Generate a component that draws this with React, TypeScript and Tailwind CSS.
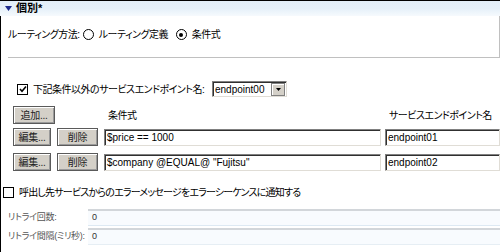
import React from "react";

const font = "font-['Liberation_Sans','Noto_Sans_CJK_JP',sans-serif] [font-feature-settings:'palt']";

function ClassicButton({ label, w }: { label: string; w: string }) {
  return (
    <div
      className={`${w} h-[18px] flex items-center justify-center bg-[#d4d0c8] border border-[#5a5a5a] shadow-[inset_1px_1px_0_#ffffff,inset_-1px_-1px_0_#9a9a9a] text-[10px] tracking-[-0.3px] text-[#222]`}
    >
      {label}
    </div>
  );
}

function SunkenInput({ value, w }: { value: string; w: string }) {
  return (
    <div
      className={`${w} h-[17px] flex items-center pl-[2px] bg-white border border-[#808080] border-b-[#e0ddd6] border-r-[#e0ddd6] shadow-[inset_1px_1px_0_#303030] text-[10px] text-black whitespace-nowrap overflow-hidden`}
    >
      {value}
    </div>
  );
}

function Radio({ checked }: { checked?: boolean }) {
  return (
    <span className="w-[11px] h-[11px] rounded-full border-[1.5px] border-black flex items-center justify-center">
      {checked && <span className="w-[4px] h-[4px] rounded-full bg-black" />}
    </span>
  );
}

function CheckBox({ checked }: { checked?: boolean }) {
  return (
    <span className="w-[11px] h-[11px] border-[1.5px] border-black bg-white flex items-center justify-center">
      {checked && (
        <svg width="8" height="8" viewBox="0 0 8 8">
          <path d="M1 4 L3 6.2 L7 1.5" stroke="black" strokeWidth="1.6" fill="none" />
        </svg>
      )}
    </span>
  );
}

export default function App() {
  return (
    <div className={`w-[500px] h-[252px] bg-white border-t border-black flex flex-col overflow-hidden ${font}`}>
      {/* header */}
      <div className="h-[15px] shrink-0 flex items-center pl-[5px] gap-[4px] bg-gradient-to-b from-[#e2eef8] via-[#e5f0f9] to-[#f6fafd]">
        <svg width="7" height="5" viewBox="0 0 7 5">
          <path d="M0 0 H7 L3.5 5 Z" fill="#1c2a8c" />
        </svg>
        <span className="text-[11px] font-bold text-black">個別*</span>
      </div>

      <div className="flex-1 border-l border-black flex flex-col text-[10px] tracking-[-0.5px] whitespace-nowrap">
        {/* routing method */}
        <div className="ml-[7px] h-[42px] shrink-0 border-b border-r border-[#c0c0c0] flex items-center pb-[4px] text-black">
          <span>ルーティング方法:</span>
          <span className="ml-[3px]">
            <Radio />
          </span>
          <span className="ml-[5px] w-[67px]">ルーティング定義</span>
          <span className="ml-[10px]">
            <Radio checked />
          </span>
          <span className="ml-[5px]">条件式</span>
        </div>

        {/* default endpoint */}
        <div className="mt-[23px] h-[16px] flex items-center pl-[16px] text-black">
          <CheckBox checked />
          <span className="ml-[5px] w-[179px]">下記条件以外のサービスエンドポイント名:</span>
          <div className="w-[75px] h-[16px] flex items-center bg-white border border-[#808080] border-b-[#e0ddd6] border-r-[#e0ddd6] shadow-[inset_1px_1px_0_#303030] tracking-normal">
            <span className="flex-1 pl-[2px] text-[10px]">endpoint00</span>
            <span className="w-[14px] h-[13px] mr-[1px] bg-[#d4d0c8] border border-[#808080] shadow-[inset_1px_1px_0_#ffffff] flex items-center justify-center">
              <svg width="5" height="3" viewBox="0 0 5 3">
                <path d="M0 0 H5 L2.5 3 Z" fill="black" />
              </svg>
            </span>
          </div>
        </div>

        {/* add row + column headings */}
        <div className="mt-[9px] h-[18px] flex items-center pl-[12px] text-black">
          <ClassicButton label="追加..." w="w-[42px]" />
          <span className="ml-[53px] w-[276px]">条件式</span>
          <span className="ml-[5px]">サービスエンドポイント名</span>
        </div>

        {/* condition rows */}
        <div className="mt-[4px] h-[18px] flex items-center pl-[12px] tracking-normal">
          <ClassicButton label="編集..." w="w-[42px]" />
          <div className="ml-[6px]">
            <ClassicButton label="削除" w="w-[41px]" />
          </div>
          <div className="ml-[6px]">
            <SunkenInput value="$price == 1000" w="w-[277px]" />
          </div>
          <div className="ml-[4px]">
            <SunkenInput value="endpoint01" w="w-[115px]" />
          </div>
        </div>
        <div className="mt-[7px] h-[18px] flex items-center pl-[12px] tracking-normal">
          <ClassicButton label="編集..." w="w-[42px]" />
          <div className="ml-[6px]">
            <ClassicButton label="削除" w="w-[41px]" />
          </div>
          <div className="ml-[6px]">
            <SunkenInput value='$company @EQUAL@ "Fujitsu"' w="w-[277px]" />
          </div>
          <div className="ml-[4px]">
            <SunkenInput value="endpoint02" w="w-[115px]" />
          </div>
        </div>

        {/* error notification */}
        <div className="mt-[14px] h-[14px] flex items-center pl-[2px] text-black tracking-[-0.8px]">
          <CheckBox />
          <span className="ml-[5px]">呼出し先サービスからのエラーメッセージをエラーシーケンスに通知する</span>
        </div>

        {/* retry */}
        <div className="mt-[10px] flex flex-col gap-[2px] text-[9px] tracking-[-0.3px] text-[#555]">
          <div className="h-[17px] flex items-center">
            <span className="w-[87px] pl-[7px]">リトライ回数:</span>
            <div className="flex-1 h-full flex items-center pl-[4px] bg-[#f8fbfe] border-t-2 border-[#d2d6da] border-b border-b-[#dde9f3] text-[#333]">
              0
            </div>
          </div>
          <div className="h-[17px] flex items-center">
            <span className="w-[87px] pl-[7px]">リトライ間隔(ミリ秒):</span>
            <div className="flex-1 h-full flex items-center pl-[4px] bg-[#f8fbfe] border-t-2 border-[#d2d6da] border-b border-b-[#e6eef4] text-[#333]">
              0
            </div>
          </div>
        </div>
      </div>
    </div>
  );
}
